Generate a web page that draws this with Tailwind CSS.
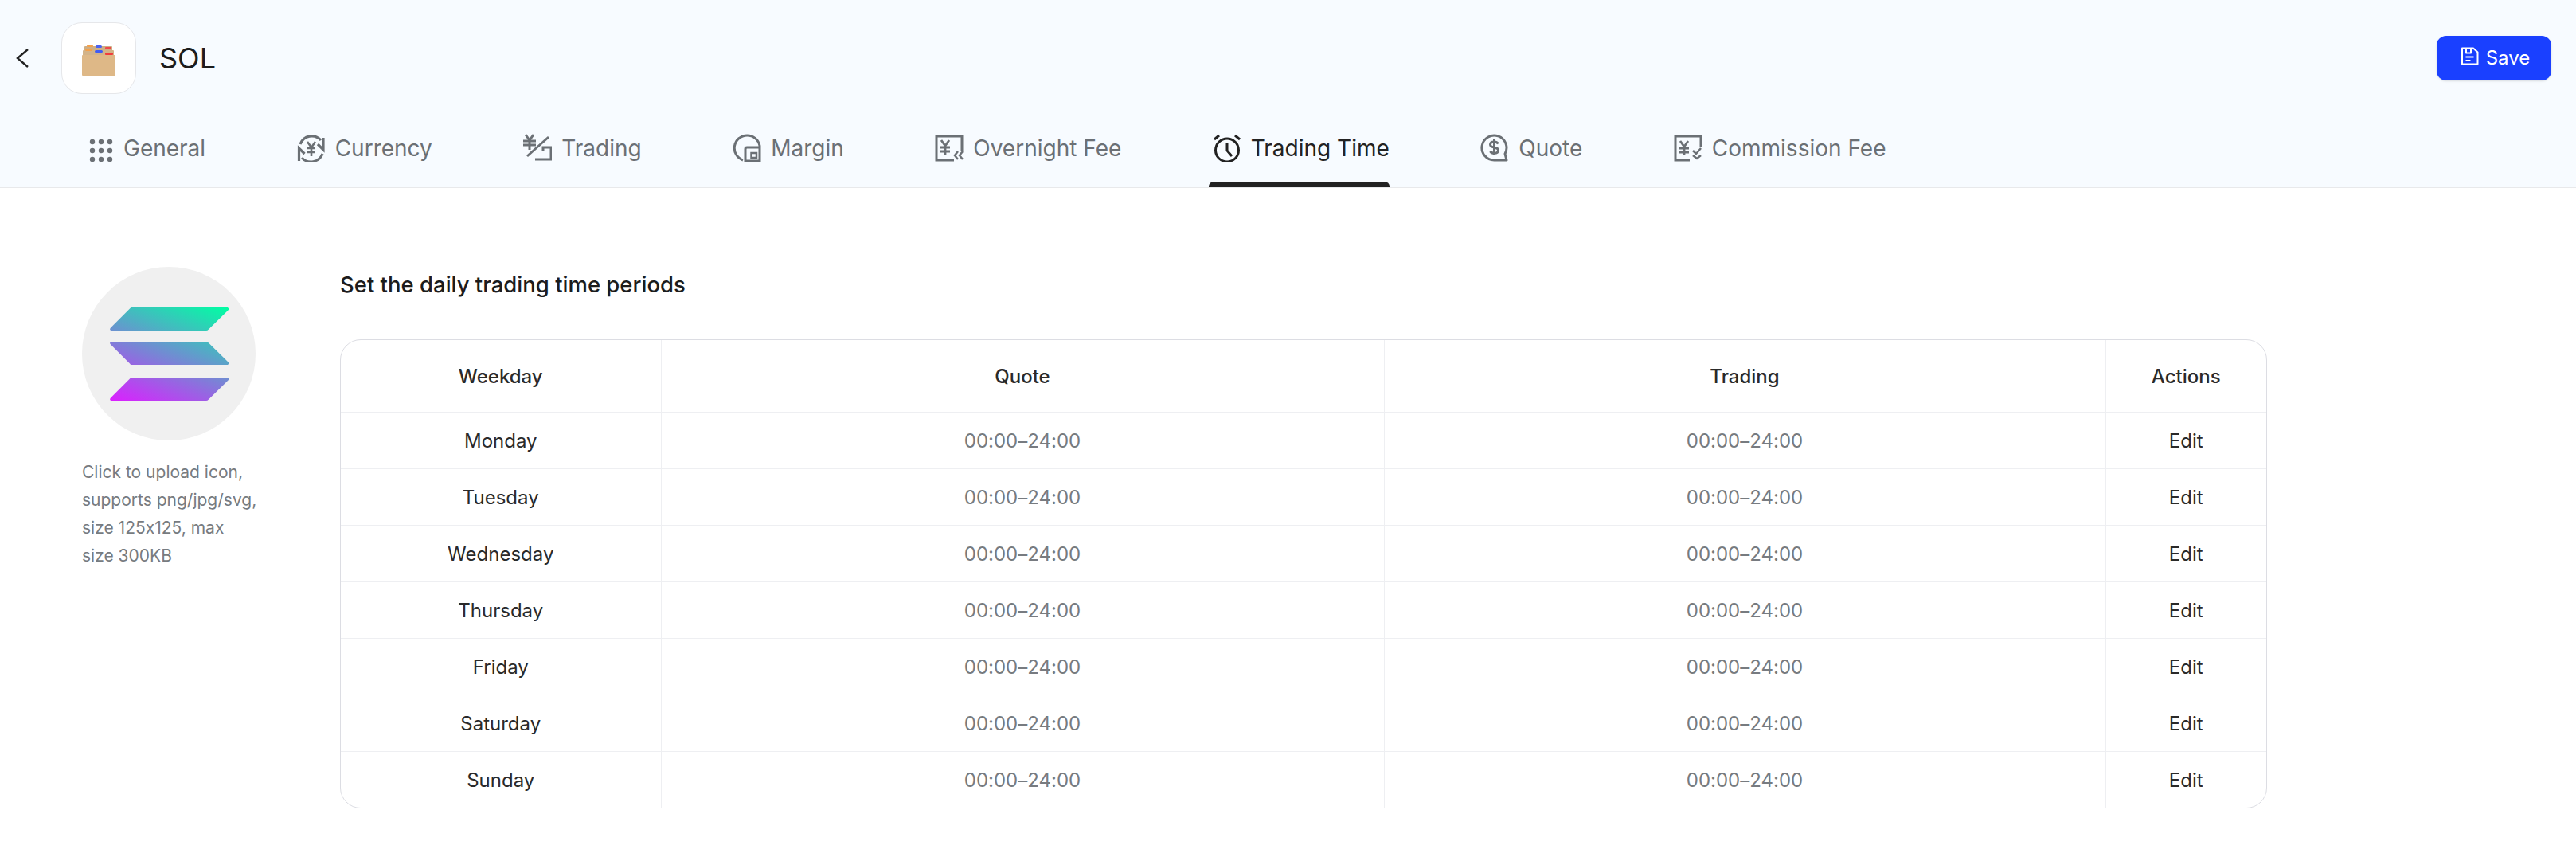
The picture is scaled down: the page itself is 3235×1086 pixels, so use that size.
<!DOCTYPE html>
<html lang="en">
<head>
    <meta charset="UTF-8">
    <title>SOL</title>
    <script src="https://cdn.jsdelivr.net/npm/@tailwindcss/browser@4"></script>
</head>
<body class="bg-white font-['Inter',sans-serif] text-[#2a2a2a] [font-feature-settings:'calt'_0]">
    <!-- Header -->
    <header class="h-[236px] bg-[#f7fbff] border-b border-[#e8e9eb]">
        <div class="flex items-center pt-[28px] pl-[19px] pr-[31px]">
            <button class="w-[58px]">
                <svg class="w-[18px] h-[26px]" viewBox="0 0 18 26" fill="none" stroke="#222" stroke-width="2.4"><path d="M16 2 3 13l13 11"/></svg>
            </button>
            <div class="w-[94px] h-[90px] bg-white border border-[#e6e7ea] rounded-[26px] flex items-center justify-center">
                <svg class="w-[48px] h-[44px]" viewBox="0 0 48 44">
                    <rect x="6" y="7" width="35" height="7" rx="1" fill="#cdae84"/>
                    <rect x="9" y="5" width="8" height="3" rx="1.500" fill="#f5a04a"/>
                    <rect x="20" y="6" width="8" height="3" rx="1.500" fill="#4a62f0"/>
                    <rect x="32" y="8" width="8" height="3" rx="1" fill="#f04a4a"/>
                    <rect x="4" y="12" width="39" height="7" rx="1" fill="#d3b388"/>
                    <rect x="7" y="10" width="9" height="3" rx="1.500" fill="#f5a04a"/>
                    <rect x="19" y="12" width="10" height="3" rx="1.500" fill="#3f5cf5"/>
                    <rect x="32" y="15" width="10" height="3" rx="1" fill="#f23c3c"/>
                    <rect x="3" y="18" width="42" height="26" rx="1" fill="#deb887"/>
                </svg>
            </div>
            <h1 class="ml-[29px] text-[36px] leading-none text-[#1c1c1c]">SOL</h1>
            <button class="ml-auto w-[144px] h-[56px] rounded-[12px] bg-[#1a40ff] text-white text-[24px] flex items-center justify-center gap-[9px] pl-[3px] shadow-sm">
                <svg class="w-[23px] h-[23px] -mt-[6px]" viewBox="0 0 23 23" fill="none" stroke="#fff" stroke-width="2" stroke-linejoin="round"><path d="M2 1.500h14l5.500 5v15H2zM7 1.500v6h6v-6M6.500 12.500h10M6.500 17h6"/></svg>
                Save
            </button>
        </div>

        <!-- Tabs -->
        <nav class="flex mt-[32px] pl-[107px] gap-[114.5px] text-[28px] text-[#6b7075]">
            <a class="relative flex h-[85px] pt-[18px] items-start gap-[12px]">
                <svg class="w-[36px] h-[36px] shrink-0" viewBox="0 0 36 36" fill="#6b7075"><circle cx="9" cy="10" r="3.200"/><circle cx="20" cy="10" r="3.200"/><circle cx="31" cy="10" r="3.200"/><circle cx="9" cy="21" r="3.200"/><circle cx="20" cy="21" r="3.200"/><circle cx="31" cy="21" r="3.200"/><circle cx="9" cy="32" r="3.200"/><circle cx="20" cy="32" r="3.200"/><circle cx="31" cy="32" r="3.200"/></svg>
                <span class="leading-[36px]">General</span>
            </a>
            <a class="relative flex h-[85px] pt-[18px] items-start gap-[12px]">
                <svg class="w-[36px] h-[36px] shrink-0" viewBox="0 0 36 36" fill="none" stroke="#6b7075" stroke-width="3.200"><path d="M4 13A15.500 15.500 0 0 1 30 8M33 5v15l-7-7M32 25A15.500 15.500 0 0 1 6 30M2.500 34V18l7 7"/><path stroke-width="2.600" d="m13 10 5 7 5-7M18 17v11M13 18h10M13 23h10"/></svg>
                <span class="leading-[36px]">Currency</span>
            </a>
            <a class="relative flex h-[85px] pt-[18px] items-start gap-[12px]">
                <svg class="w-[36px] h-[36px] shrink-0" viewBox="0 0 36 36" fill="none" stroke="#6b7075" stroke-width="3"><path d="m3 1 5 7 5-7M8 8v12M0 9h16M0 14h16M5 28 32 4M15 32h20V17H25v5"/></svg>
                <span class="leading-[36px]">Trading</span>
            </a>
            <a class="relative flex h-[85px] pt-[18px] items-start gap-[12px]">
                <svg class="w-[36px] h-[36px] shrink-0" viewBox="0 0 36 36" fill="none" stroke="#6b7075" stroke-width="3"><path d="M13 33A16 16 0 1 1 34 15v19H16V19q0-2 2-2h16"/><path d="M23.500 24h6.500v6h-6.500z" stroke-width="2.500"/></svg>
                <span class="leading-[36px]">Margin</span>
            </a>
            <a class="relative flex h-[85px] pt-[18px] items-start gap-[12px]">
                <svg class="w-[36px] h-[36px] shrink-0" viewBox="0 0 36 36" fill="none" stroke="#6b7075" stroke-width="3"><path d="M24 33H2V3h32v19"/><path stroke-width="2.800" d="m8 8 5 7 5-7M13 15v12M7 17h12M7 22h12"/><path stroke-width="2.500" d="m29 22-4 5 4 5M35 22l-4 5 4 5"/></svg>
                <span class="leading-[36px]">Overnight Fee</span>
            </a>
            <a class="relative flex h-[85px] pt-[18px] items-start gap-[12px] text-[#222]">
                <svg class="w-[36px] h-[36px] shrink-0" viewBox="0 0 36 36" fill="none" stroke="#222" stroke-width="3"><circle cx="18" cy="20.500" r="14.500"/><path d="M18 11v10l6 7M2 7l6-5M34 7l-6-5"/></svg>
                <span class="leading-[36px]">Trading Time</span>
                <i class="absolute -left-[5px] right-0 bottom-0 h-[7px] bg-[#222] rounded-t-[6px]"></i>
            </a>
            <a class="relative flex h-[85px] pt-[18px] items-start gap-[12px]">
                <svg class="w-[36px] h-[36px] shrink-0" viewBox="0 0 36 36" fill="none" stroke="#6b7075" stroke-width="3" stroke-linejoin="round"><path d="M17.500 33A15.500 15.500 0 1 1 31 25l2 8z"/><path d="M22.500 12.500c-1-1.500-2.500-2.500-5-2.500-3 0-5 1.300-5 3.500s2 3 5 3.500 5 1.500 5 3.800-2 3.500-5 3.500c-2.500 0-4-1-5-2.500M17.500 7v20"/></svg>
                <span class="leading-[36px]">Quote</span>
            </a>
            <a class="relative flex h-[85px] pt-[18px] items-start gap-[12px]">
                <svg class="w-[36px] h-[36px] shrink-0" viewBox="0 0 36 36" fill="none" stroke="#6b7075" stroke-width="3"><path d="M20 33H2V3h32v14"/><path stroke-width="2.800" d="m8 9 5 7 5-7M13 16v11M7 18h12M7 23h12"/><path stroke-width="2.500" d="m24 21 4 4 6-7M24 27l5 4 5-4"/></svg>
                <span class="leading-[36px]">Commission Fee</span>
            </a>
        </nav>
    </header>

    <main class="flex pl-[103px] pt-[99px]">
        <!-- Icon upload -->
        <div class="w-[222px] shrink-0">
            <div class="w-[218px] h-[218px] rounded-full bg-[#f0f0f0] flex items-center justify-center">
                <svg class="w-[149px] h-[117px]" viewBox="0 0 149 117">
                    <defs>
                        <linearGradient id="sol" gradientUnits="userSpaceOnUse" x1="0" y1="117" x2="60.300" y2="-35">
                            <stop offset="0" stop-color="#dc1fff"/>
                            <stop offset="1" stop-color="#00ffa3"/>
                        </linearGradient>
                    </defs>
                    <path fill="url(#sol)" d="M27 0h120c2 0 3 2 1.500 3.500L124 27.500q-1.500 1.500-3 1.500H2c-2 0-2.500-2-1-3.500L25 1.500Q26 0 27 0z"/>
                    <path fill="url(#sol)" d="M27 73h120c2 0 3-2 1.500-3.500L124 45.500q-1.500-1.500-3-1.500H2c-2 0-2.500 2-1 3.500L25 71.500q1 1.500 2 1.500z" transform="translate(0 -1)"/>
                    <path fill="url(#sol)" d="M27 88h120c2 0 3 2 1.500 3.500L124 115.500q-1.500 1.500-3 1.500H2c-2 0-2.500-2-1-3.500L25 89.500Q26 88 27 88z"/>
                </svg>
            </div>
            <p class="mt-[22px] text-[21px] leading-[35px] text-[#777b80]">Click to upload icon,<br>supports png/jpg/svg,<br>size 125x125, max<br>size 300KB</p>
        </div>

        <!-- Trading time table -->
        <section class="ml-[102px] w-[2420px]">
            <h2 class="text-[27.5px] leading-[46px] -mt-[1px] font-medium text-[#1c1c1c]">Set the daily trading time periods</h2>
            <div class="mt-[46px] border border-[#dcdde3] rounded-[26px] overflow-hidden">
                <table class="w-full table-fixed border-collapse text-center text-[24px] [&_td]:pt-[3px] [&_th]:pt-[3px]">
                    <colgroup>
                        <col class="w-[402px]"><col class="w-[908px]"><col class="w-[906px]"><col>
                    </colgroup>
                    <thead>
                        <tr class="h-[90px]">
                            <th class="font-medium border-r border-b border-[#eeeff2]">Weekday</th>
                            <th class="font-medium border-r border-b border-[#eeeff2]">Quote</th>
                            <th class="font-medium border-r border-b border-[#eeeff2]">Trading</th>
                            <th class="font-medium border-b border-[#eeeff2]">Actions</th>
                        </tr>
                    </thead>
                    <tbody>
                        <tr class="h-[71px]"><td class="border-r border-b border-[#eeeff2]">Monday</td><td class="border-r border-b border-[#eeeff2] text-[#777b80]">00:00–24:00</td><td class="border-r border-b border-[#eeeff2] text-[#777b80]">00:00–24:00</td><td class="border-b border-[#eeeff2]">Edit</td></tr>
                        <tr class="h-[71px]"><td class="border-r border-b border-[#eeeff2]">Tuesday</td><td class="border-r border-b border-[#eeeff2] text-[#777b80]">00:00–24:00</td><td class="border-r border-b border-[#eeeff2] text-[#777b80]">00:00–24:00</td><td class="border-b border-[#eeeff2]">Edit</td></tr>
                        <tr class="h-[71px]"><td class="border-r border-b border-[#eeeff2]">Wednesday</td><td class="border-r border-b border-[#eeeff2] text-[#777b80]">00:00–24:00</td><td class="border-r border-b border-[#eeeff2] text-[#777b80]">00:00–24:00</td><td class="border-b border-[#eeeff2]">Edit</td></tr>
                        <tr class="h-[71px]"><td class="border-r border-b border-[#eeeff2]">Thursday</td><td class="border-r border-b border-[#eeeff2] text-[#777b80]">00:00–24:00</td><td class="border-r border-b border-[#eeeff2] text-[#777b80]">00:00–24:00</td><td class="border-b border-[#eeeff2]">Edit</td></tr>
                        <tr class="h-[71px]"><td class="border-r border-b border-[#eeeff2]">Friday</td><td class="border-r border-b border-[#eeeff2] text-[#777b80]">00:00–24:00</td><td class="border-r border-b border-[#eeeff2] text-[#777b80]">00:00–24:00</td><td class="border-b border-[#eeeff2]">Edit</td></tr>
                        <tr class="h-[71px]"><td class="border-r border-b border-[#eeeff2]">Saturday</td><td class="border-r border-b border-[#eeeff2] text-[#777b80]">00:00–24:00</td><td class="border-r border-b border-[#eeeff2] text-[#777b80]">00:00–24:00</td><td class="border-b border-[#eeeff2]">Edit</td></tr>
                        <tr class="h-[71px]"><td class="border-r border-[#eeeff2]">Sunday</td><td class="border-r border-[#eeeff2] text-[#777b80]">00:00–24:00</td><td class="border-r border-[#eeeff2] text-[#777b80]">00:00–24:00</td><td>Edit</td></tr>
                    </tbody>
                </table>
            </div>
        </section>
    </main>
</body>
</html>
